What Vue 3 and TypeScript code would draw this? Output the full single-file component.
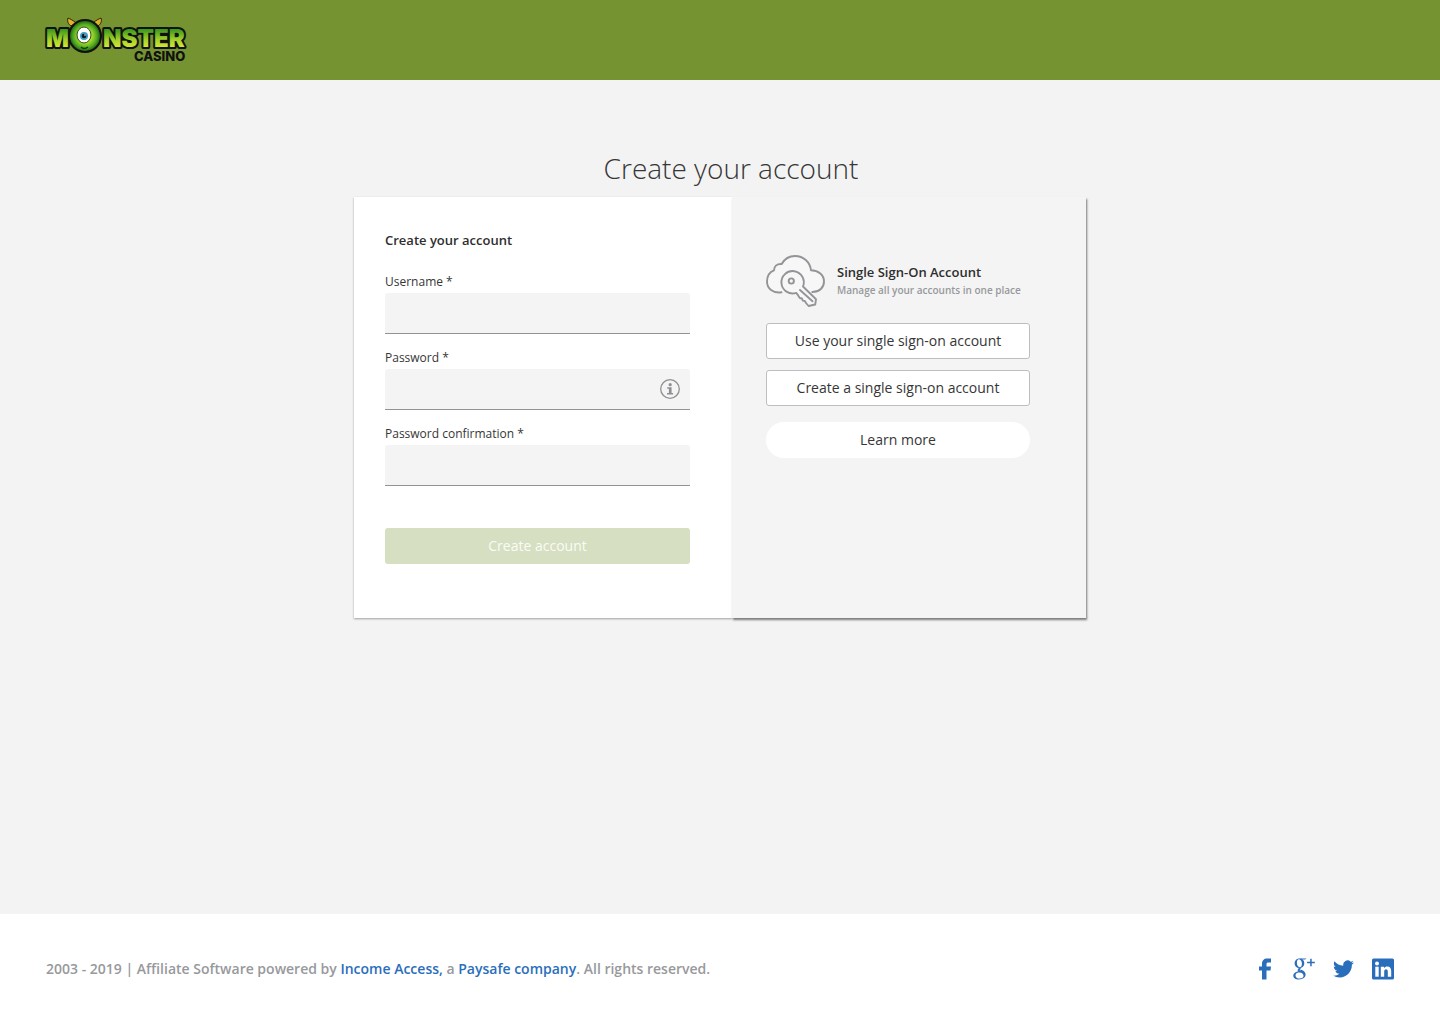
<script setup lang="ts">
import { ref } from 'vue'

interface Field {
  id: string
  label: string
  type: string
  hint: boolean
}

const fields: Field[] = [
  { id: 'username', label: 'Username *', type: 'text', hint: false },
  { id: 'password', label: 'Password *', type: 'password', hint: true },
  { id: 'confirmation', label: 'Password confirmation *', type: 'password', hint: false },
]

const values = ref<Record<string, string>>({ username: '', password: '', confirmation: '' })
</script>

<template>
  <div class="page">
    <header class="topbar">
      <a class="logo" href="#" aria-label="Monster Casino">
        <svg width="144" height="48" viewBox="0 0 144 48">
          <defs>
            <linearGradient id="letters" x1="0" y1="0" x2="0" y2="1">
              <stop offset="0.2" stop-color="#3f9a1c" />
              <stop offset="0.55" stop-color="#a5d22a" />
              <stop offset="0.85" stop-color="#dcea35" />
            </linearGradient>
            <radialGradient id="body" cx="0.5" cy="0.5" r="0.5">
              <stop offset="0.4" stop-color="#b4e02c" />
              <stop offset="0.75" stop-color="#4fa821" />
              <stop offset="1" stop-color="#17540f" />
            </radialGradient>
          </defs>
          <g class="logo-word">
            <text x="2" y="31">M</text>
            <text x="59" y="31">NSTER</text>
          </g>
          <path d="M27 10C24 8 23 5 24 2c2 1 5 2 8 5zM54 10c3-2 4-5 3-8-2 1-5 2-8 5z" fill="#e0b32a" stroke="#2a2008" stroke-width="1" />
          <circle cx="41" cy="20" r="16" fill="url(#body)" stroke="#111" stroke-width="2" />
          <ellipse cx="40" cy="19" rx="7" ry="8" fill="#fff" stroke="#24501a" stroke-width="1" />
          <circle cx="40" cy="20" r="4" fill="#3f9fc4" />
          <circle cx="40" cy="20" r="2.3" fill="#0b1d28" />
          <circle cx="41" cy="19" r="0.8" fill="#fff" />
          <path d="M37 31q3 3 7 0" fill="none" stroke="#123c0c" stroke-width="1.5" />
          <text class="logo-sub" x="90" y="45">CASINO</text>
        </svg>
      </a>
    </header>

    <main class="content">
      <h1 class="title">Create your account</h1>
      <div class="card">
        <form class="form" @submit.prevent>
          <h2 class="heading">Create your account</h2>
          <div v-for="field in fields" :key="field.id" class="field">
            <label class="label" :for="field.id">{{ field.label }}</label>
            <div class="control">
              <input :id="field.id" v-model="values[field.id]" class="input" :type="field.type" />
              <button v-if="field.hint" class="hint" type="button" aria-label="Password rules">
                <svg width="20" height="20" viewBox="0 0 20 20">
                  <circle cx="10" cy="10" r="9.3" fill="none" stroke="#8d8f92" stroke-width="1.3" />
                  <circle cx="10.2" cy="5.7" r="1.6" fill="#8d8f92" />
                  <path d="M7.2 8.3h4.4v5.6h1.5v1.6H7v-1.6h1.9V9.8H7.2z" fill="#8d8f92" />
                </svg>
              </button>
            </div>
          </div>
          <button class="submit" type="submit">Create account</button>
        </form>

        <section class="sso">
          <div class="sso-head">
            <svg width="59" height="53" viewBox="0 0 59 53" fill="none" stroke="#929497" stroke-width="1.9" stroke-linecap="round" stroke-linejoin="round">
              <path d="M15.500 37.300C7 38.500 1 33.500 1 26.500 1 21 3.500 17 8 15.300 8.200 11 11 8.600 15.700 9 18.500 4 23 1 29 1 37.500 1 44 7 45 15.300 52.500 15.500 58 20 58 26.500 58 32.500 53.500 36.900 46.300 37" fill="#f7f7f7" />
              <path d="M37 31.500 50 44.300 49.200 49.500 42.600 51 40 48 39 46.200 36.800 45.600 36 43.500 33.800 43 32 40.200 30.200 37.900A11.200 11.200 0 1 1 37 31.500z" fill="#f7f7f7" />
              <path d="M34 35 46.500 46.300" />
              <circle cx="25.300" cy="26" r="2.600" />
            </svg>
            <div class="sso-text">
              <h2 class="heading">Single Sign-On Account</h2>
              <p class="sub">Manage all your accounts in one place</p>
            </div>
          </div>
          <button class="outline" type="button">Use your single sign-on account</button>
          <button class="outline" type="button">Create a single sign-on account</button>
          <button class="pill" type="button">Learn more</button>
        </section>
      </div>
    </main>

    <footer class="footer">
      <p class="legal">
        2003 - 2019 | Affiliate Software powered by <a href="#">Income Access,</a> a <a href="#">Paysafe company</a>. All rights reserved.
      </p>
      <nav class="social" aria-label="Social media">
        <a href="#" aria-label="Facebook">
          <svg width="12" height="22" viewBox="0 0 12 22"><path d="M3 21.500V12.500H0V8.500h3V5.700C3 2.500 5 .5 8.200 .5H12v4H9.500C8 4.500 7.500 5 7.500 6.200v2.300H12l-.5 4h-4v9z" /></svg>
        </a>
        <a href="#" aria-label="Google Plus">
          <svg width="22" height="22" viewBox="0 0 22 22">
            <path fill-rule="evenodd" d="M6.500 .5C3.500 .5 1.600 2.800 1.600 5.600c0 2.600 1.900 4.500 4.700 4.500 3 0 5-2.100 5-4.900 0-2.700-2-4.700-4.800-4.700zM6 1.300c1.800 0 2.900 2.200 2.900 4.500 0 2-.8 3.400-2.200 3.400C5 9.200 3.900 7 3.900 4.700 3.900 2.700 4.600 1.300 6 1.300z" />
            <path d="M6.500 .5H13.600L12 1.600H9z" />
            <path d="M6.300 9.800C5.200 10.600 4.700 11.300 4.700 12.200c0 1.300 1 2 2.500 2.300l1.300-.3C7.500 13.500 6.800 12.900 6.800 12.200c0-.8.600-1.400 1.400-2.200z" />
            <path fill-rule="evenodd" d="M7 13.200C3 13.300 .3 15 .3 17.700c0 2.300 2.300 3.800 5.700 3.800 4.100 0 6.600-2.200 6.600-4.900 0-2.200-1.400-3.100-3.200-4.300L7.500 11.500zM7.300 14.200c2 1.200 3.200 1.900 3.200 3.500 0 1.700-1.400 2.800-3.900 2.800-2.400 0-4.100-1.200-4.100-3.100 0-2 2-3.200 4.800-3.200z" />
            <path d="M17.200 .8h1.500v3h3.100v1.400h-3.100v3.100h-1.500V5.200h-3.100V3.800h3.100z" />
          </svg>
        </a>
        <a href="#" aria-label="Twitter">
          <svg width="21" height="18" viewBox="0 2 24 20"><path d="M23.953 4.570a10 10 0 01-2.825.775 4.958 4.958 0 002.163-2.723c-.951.555-2.005.959-3.127 1.184a4.920 4.920 0 00-8.384 4.482C7.690 8.095 4.067 6.130 1.640 3.162a4.822 4.822 0 00-.666 2.475c0 1.710.870 3.213 2.188 4.096a4.904 4.904 0 01-2.228-.616v.060a4.923 4.923 0 003.946 4.827 4.996 4.996 0 01-2.212.085 4.936 4.936 0 004.604 3.417 9.867 9.867 0 01-6.102 2.105c-.390 0-.779-.023-1.170-.067a13.995 13.995 0 007.557 2.209c9.053 0 13.998-7.496 13.998-13.985 0-.210 0-.420-.015-.630A9.935 9.935 0 0024 4.590z" /></svg>
        </a>
        <a href="#" aria-label="LinkedIn">
          <svg width="22" height="22" viewBox="0 0 22 22">
            <rect y="0.500" width="22" height="21" rx="1.500" />
            <g fill="#fff">
              <circle cx="5" cy="5.500" r="2" />
              <rect x="3.300" y="8.700" width="3.400" height="10" />
              <path d="M8.800 8.700H12v1.400c.8-1.100 1.900-1.700 3.300-1.700 2.700 0 3.900 1.700 3.900 4.600v5.700h-3.400v-5.100c0-1.500-.5-2.400-1.700-2.400-1.300 0-1.900 1-1.900 2.400v5.100H8.800z" />
            </g>
          </svg>
        </a>
      </nav>
    </footer>
  </div>
</template>

<style>
body {
  margin: 0;
}
</style>

<style scoped>
.page {
  display: flex;
  flex-direction: column;
  min-height: 100vh;
  background: #f3f3f3;
  color: #363636;
  font-family: 'Open Sans', 'Noto Sans', sans-serif;
}

h1,
h2,
p {
  margin: 0;
}

button {
  font-family: inherit;
  cursor: pointer;
}

svg {
  display: block;
}

.topbar {
  display: flex;
  align-items: center;
  height: 80px;
  padding: 0 44px;
  background: #759330;
}

.logo-word text {
  font: 900 24px 'Inter', sans-serif;
  fill: url(#letters);
  stroke: #111;
  stroke-width: 4px;
  stroke-linejoin: round;
  paint-order: stroke;
}

.logo-sub {
  font: 800 13px 'Inter', sans-serif;
  fill: #111;
}

.content {
  flex: 1;
  display: flex;
  flex-direction: column;
  align-items: center;
  padding: 70px 24px 40px;
}

.title {
  padding-left: 22px;
  margin-bottom: 11px;
  font-size: 28px;
  font-weight: 300;
  line-height: 36px;
}

.card {
  display: grid;
  grid-template-columns: minmax(0, 378fr) minmax(0, 354fr);
  width: 100%;
  max-width: 732px;
}

.form {
  padding: 34px 42px 54px 31px;
  background: #fff;
  box-shadow: 0 1px 2px rgba(0, 0, 0, 0.35);
}

.heading {
  font-size: 13px;
  font-weight: 600;
  line-height: 18px;
  color: #2e2e2e;
}

.field {
  margin-bottom: 16px;
}

.form .heading {
  margin-bottom: 25px;
}

.label {
  display: block;
  margin-bottom: 3px;
  font-size: 12px;
  line-height: 16px;
}

.control {
  position: relative;
}

.input {
  display: block;
  box-sizing: border-box;
  width: 100%;
  height: 41px;
  padding: 0 12px;
  border: 0;
  border-bottom: 1px solid #919397;
  border-radius: 3px 3px 0 0;
  background: #f4f4f4;
  font: inherit;
  font-size: 14px;
}

.hint {
  position: absolute;
  top: 10px;
  right: 10px;
  padding: 0;
  border: 0;
  background: none;
}

.submit,
.outline,
.pill {
  display: block;
  box-sizing: border-box;
  width: 100%;
  height: 36px;
  padding: 0;
  font-size: 14px;
  line-height: 20px;
  color: #363636;
}

.submit {
  margin-top: 42px;
  border: 0;
  border-radius: 3px;
  background: #d6dfc1;
  color: #fafbf7;
}

.sso {
  position: relative;
  padding: 58px 56px 58px 34px;
  background: #f4f4f4;
  box-shadow: 1px 2px 2px rgba(0, 0, 0, 0.5);
}

.sso-head {
  display: flex;
  gap: 12px;
  margin-bottom: 15px;
}

.sso-text {
  padding-top: 8px;
}

.sub {
  font-size: 10px;
  font-weight: 600;
  line-height: 18px;
  color: #97999c;
}

.outline {
  margin-bottom: 11px;
  border: 1px solid #bcbec0;
  border-radius: 3px;
  background: #fff;
}

.pill {
  margin-top: 16px;
  border: 0;
  border-radius: 18px;
  background: #fff;
}

.footer {
  display: flex;
  align-items: center;
  justify-content: space-between;
  gap: 24px;
  min-height: 110px;
  padding: 0 46px;
  background: #fff;
}

.legal {
  font-size: 14px;
  font-weight: 600;
  line-height: 20px;
  color: #97999c;
}

.legal a {
  color: #2a6ebb;
  text-decoration: none;
}

.social {
  display: flex;
  align-items: center;
  gap: 18px;
  fill: #2a6ebb;
}

.social a:first-child {
  margin-right: 4px;
}
</style>
